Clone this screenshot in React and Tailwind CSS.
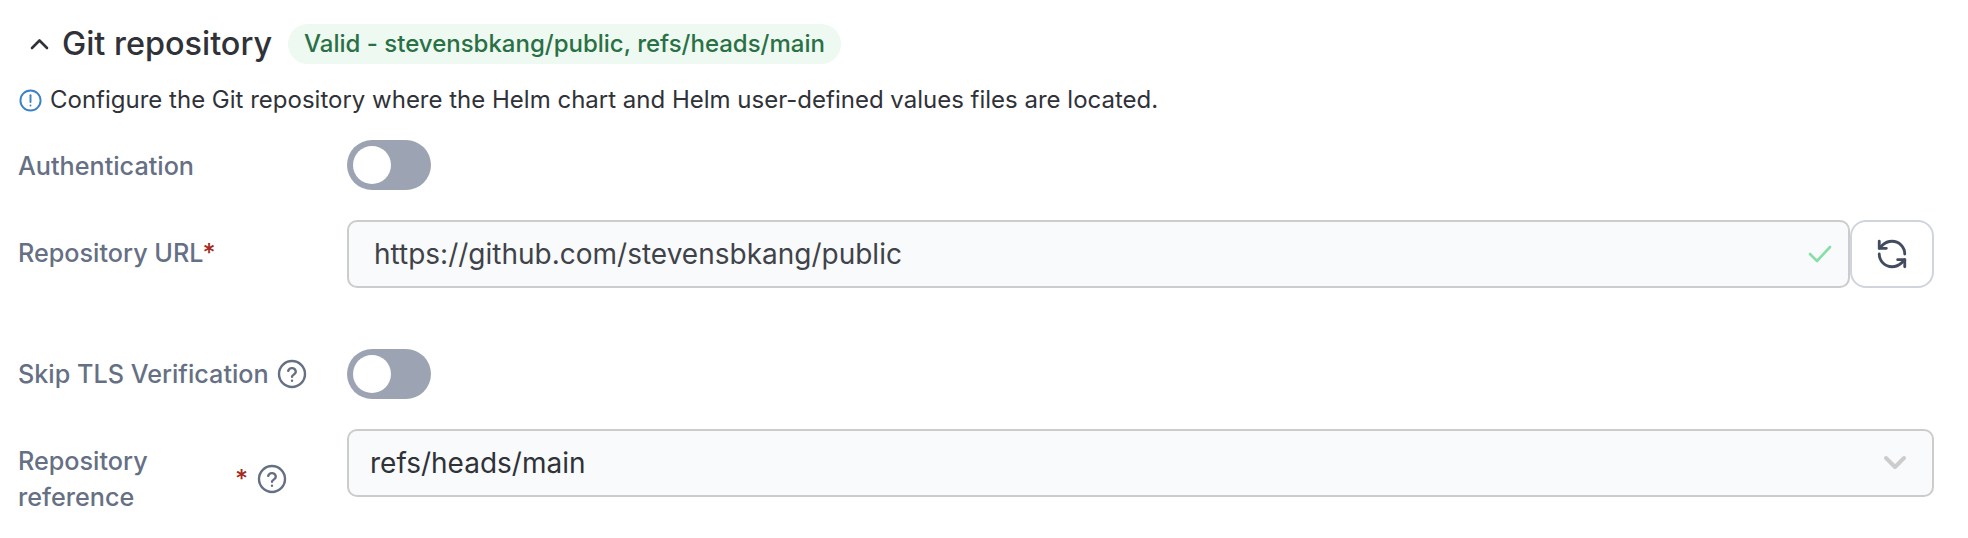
import React from 'react';

const InfoIcon = () => (
  <svg width="23" height="23" viewBox="0 0 24 24" fill="none" stroke="#3b82c4" strokeWidth="2" strokeLinecap="round">
    <circle cx="12" cy="12" r="10.5" />
    <path d="M12 6.5v7" />
    <path d="M12 17.2v.1" />
  </svg>
);

const HelpIcon = () => (
  <svg width="30" height="30" viewBox="0 0 30 30" fill="none" stroke="#667085" strokeWidth="2.4" strokeLinecap="round" strokeLinejoin="round">
    <circle cx="15" cy="15" r="13" />
    <path d="M11.2 11.8a3.9 3.9 0 0 1 7.6 1c0 2.5-3.8 3-3.8 5" />
    <path d="M15 21.6v.1" />
  </svg>
);

const Toggle = () => (
  <div className="flex h-[50px] w-[84px] items-center rounded-full bg-[#9ca3b2] pl-[6px]">
    <div className="h-[38px] w-[38px] rounded-full bg-white" />
  </div>
);

const Required = () => <span className="text-[#a32a1c]">*</span>;

const Label = ({ children }) => (
  <div className="w-[347px] shrink-0 pl-[18px] text-[25.2px] font-medium leading-[36px] text-[#667085]">{children}</div>
);

export default function App() {
  return (
    <div className="h-[538px] w-[1968px] overflow-hidden bg-white font-['Inter',sans-serif]">
      <div className="mt-[24px] flex h-[40px] items-center pl-[30px]">
        <svg width="19" height="12" viewBox="0 0 19 12" fill="none" stroke="#2f3238" strokeWidth="2.6" strokeLinecap="round" strokeLinejoin="round">
          <path d="M2 10l7.5-7.5L17 10" />
        </svg>
        <h1 className="ml-[13px] text-[32.4px] font-medium leading-[40px] text-[#2f3238]">Git repository</h1>
        <span className="ml-[16px] flex h-[40px] items-center rounded-full bg-[#edf9f1] px-[16px] text-[24px] font-medium text-[#2a7045]">
          Valid - stevensbkang/public, refs/heads/main
        </span>
      </div>

      <div className="mt-[20px] flex h-[32px] items-center pl-[19px]">
        <InfoIcon />
        <span className="ml-[8px] text-[24px] leading-[32px] text-[#2f3238]">
          Configure the Git repository where the Helm chart and Helm user-defined values files are located.
        </span>
      </div>

      <div className="mt-[24px] flex h-[50px] items-center">
        <Label><div className="pt-[1px]">Authentication</div></Label>
        <Toggle />
      </div>

      <div className="mt-[30px] flex h-[68px] items-start">
        <Label><div className="pt-[15px]">Repository URL<Required /></div></Label>
        <div className="flex h-[68px] w-[1503px] items-center justify-between rounded-[10px] border-2 border-[#cccccc] bg-[#f9fafb] pl-[25px] pr-[16px] text-[28px] text-[#3f4349]">
          <span>https://github.com/stevensbkang/public</span>
          <svg width="24" height="18" viewBox="0 0 24 18" fill="none" stroke="#86e0a5" strokeWidth="2.6" strokeLinecap="round" strokeLinejoin="round">
            <path d="M2 9l7 7L22 2" />
          </svg>
        </div>
        <button className="flex h-[68px] w-[84px] items-center justify-center rounded-[16px] border-2 border-[#d0d5dd] bg-white">
          <svg width="34" height="34" viewBox="0 0 24 24" fill="none" stroke="#434b5f" strokeWidth="2" strokeLinecap="round" strokeLinejoin="round">
            <path d="M21 12a9 9 0 0 0-9-9 9.75 9.75 0 0 0-6.74 2.74L3 8" />
            <path d="M3 3v5h5" />
            <path d="M3 12a9 9 0 0 0 9 9 9.75 9.75 0 0 0 6.74-2.74L21 16" />
            <path d="M16 16h5v5" />
          </svg>
        </button>
      </div>

      <div className="mt-[61px] flex h-[50px] items-center">
        <Label>
          <div className="flex items-center gap-[8px]">Skip TLS Verification <HelpIcon /></div>
        </Label>
        <Toggle />
      </div>

      <div className="mt-[30px] flex items-start">
        <Label>
          <div className="flex items-center pt-[14px]">
            <div className="w-[217px] leading-[36px]">Repository reference</div>
            <Required />
            <span className="ml-[9px]"><HelpIcon /></span>
          </div>
        </Label>
        <div className="flex h-[68px] w-[1587px] items-center justify-between rounded-[10px] border-2 border-[#cccccc] bg-[#f9fafb] pl-[21px] pr-[25px] text-[28px] text-[#2f3238]">
          <span>refs/heads/main</span>
          <svg width="24" height="16" viewBox="0 0 24 16" fill="none" stroke="#cccccc" strokeWidth="4" strokeLinecap="round" strokeLinejoin="round">
            <path d="M3 3l9 9 9-9" />
          </svg>
        </div>
      </div>
    </div>
  );
}
